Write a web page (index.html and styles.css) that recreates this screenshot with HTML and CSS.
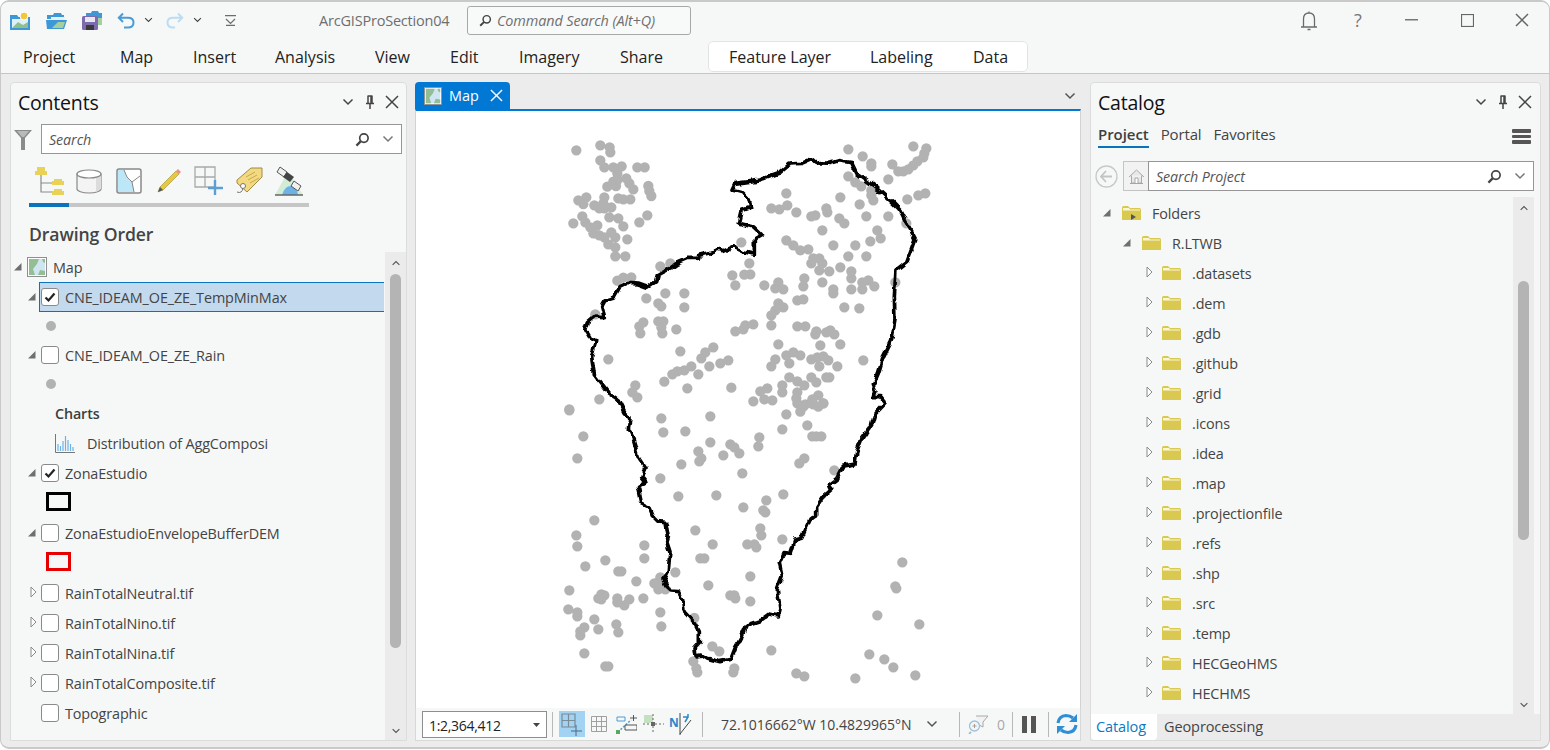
FILE: index.html
```html
<!DOCTYPE html>
<html lang="en">
<head>
<meta charset="utf-8">
<title>ArcGISProSection04</title>
<link rel="stylesheet" href="styles.css">
</head>
<body>
<svg class="defs" width="0" height="0">
  <defs>
    <symbol id="folder" viewBox="0 0 19 15"><path d="M0 2.500Q0 1 1.500 1H6L8 3H17.500Q19 3 19 4.500V15H0Z" fill="#dac950"/><path d="M1 3H7L8 4.500H18V5.500H1Z" fill="#fbf6d6"/></symbol>
    <symbol id="tri" viewBox="0 0 9 9"><path d="M8.500 1V8.500H1Z" fill="#6f6f6f"/></symbol>
    <symbol id="trio" viewBox="0 0 7 12"><path d="M1 1L6 6L1 11Z" fill="#fff" stroke="#8a8a8a"/></symbol>
    <symbol id="chev" viewBox="0 0 12 8"><path d="M1.500 1.500L6 6L10.500 1.500" fill="none" stroke="currentColor" stroke-width="1.500"/></symbol>
    <symbol id="x" viewBox="0 0 14 14"><path d="M1 1L13 13M13 1L1 13" fill="none" stroke="currentColor" stroke-width="1.500"/></symbol>
    <symbol id="pin" viewBox="0 0 10 14"><path d="M2.500 1H7.500M3 1V8M7 1V8H6V1M1 8.500H9M5 9V14" fill="none" stroke="#444" stroke-width="1.500"/></symbol>
    <symbol id="mag" viewBox="0 0 16 16"><circle cx="9.500" cy="6.500" r="4.500" fill="none" stroke="#444" stroke-width="1.800"/><path d="M6 10L1.500 14.500" stroke="#444" stroke-width="2.400"/></symbol>
    <symbol id="check" viewBox="0 0 18 18"><path d="M4.500 9.500L7.500 12.500L13.500 5.500" fill="none" stroke="#222" stroke-width="2.200"/></symbol>
    <symbol id="mapic" viewBox="0 0 20 20"><rect x=".5" y=".5" width="19" height="19" fill="#fff" stroke="#8f8f8f"/><path d="M2 2H18V18H2Z" fill="#cfe6f2"/><path d="M2 2H12L10 7L6 12L8 18H2Z" fill="#93bd93"/><path d="M11 18L13 13L18 14V18ZM15 2H18V6L16 5Z" fill="#93bd93"/></symbol>
  </defs>
</svg>
<div class="app">
  <header class="titlebar">
    <div class="qat">
      <svg width="21" height="19" viewBox="0 0 21 19"><path d="M0 4H7L8.500 6H20V19H0Z" fill="#3e98d8"/><path d="M2 8H18V17H2Z" fill="#dff0fa"/><path d="M2 17L8 11L13 14L18 11V17Z" fill="#8fc08c"/><circle cx="14" cy="5" r="4" fill="#f2c73c" stroke="#fff"/></svg>
      <svg width="21" height="17" viewBox="0 0 21 17"><path d="M1 3H7L8 1H15L16 3H18V7H1Z" fill="#3e98d8"/><path d="M5 5H19V9H5Z" fill="#e4f1f9"/><path d="M0 8H21L18 17H1Z" fill="#3e98d8"/><path d="M6 16L12 10H19L17 16Z" fill="#a5cf9f"/></svg>
      <svg width="21" height="20" viewBox="0 0 21 20"><path d="M4 3H9L10 1H16L17 3H20V15H4Z" fill="#3e98d8"/><rect x="0" y="6" width="16" height="14" rx="1.500" fill="#7c6cae"/><rect x="3" y="7" width="10" height="5" fill="#e8e6ef"/><rect x="4" y="15" width="8" height="5" fill="#3a3a3a"/><path d="M16 8H20V15H16Z" fill="#a5cf9f"/></svg>
      <svg class="undo" width="18" height="17" viewBox="0 0 18 17"><path d="M6 1.500L1.800 5.800L6 10M2 5.800H11Q16.500 5.800 16.500 10.500Q16.500 15.500 11 15.500H7" fill="none" stroke="#4a9cd6" stroke-width="2"/></svg>
      <svg class="qchev" width="9" height="6"><use href="#chev"/></svg>
      <svg class="redo" width="18" height="17" viewBox="0 0 18 17"><path d="M12 1.500L16.200 5.800L12 10M16 5.800H7Q1.500 5.800 1.500 10.500Q1.500 15.500 7 15.500H9" fill="none" stroke="#bcdcf2" stroke-width="2"/></svg>
      <svg class="qchev" width="9" height="6"><use href="#chev"/></svg>
      <svg class="cust" width="11" height="11" viewBox="0 0 11 11"><path d="M0 .7H11M1 4L5.500 8.500L10 4M1 10.400H10" fill="none" stroke="#6c6c6c" stroke-width="1.200"/></svg>
    </div>
    <div class="doc">ArcGISProSection04</div>
    <div class="cmd">
      <svg width="13" height="13"><use href="#mag"/></svg>
      <span>Command Search (Alt+Q)</span>
    </div>
    <div class="winbtns">
      <svg width="18" height="21" viewBox="0 0 18 21"><path d="M9 1.500V3M1 17H17M3.500 17V9Q3.500 3 9 3Q14.500 3 14.500 9V17M7.500 19.500H10.500" fill="none" stroke="#6a6a6a" stroke-width="1.300"/></svg>
      <span class="help">?</span>
      <svg class="min" width="13" height="2"><rect width="13" height="1.500" fill="#777"/></svg>
      <svg class="max" width="13" height="13"><rect x=".5" y=".5" width="12" height="12" fill="none" stroke="#666" stroke-width="1.200"/></svg>
      <svg class="close" width="14" height="14"><use href="#x"/></svg>
    </div>
  </header>
  <nav class="ribbon">
    <div class="rtabs">
      <span>Project</span><span>Map</span><span>Insert</span><span>Analysis</span><span>View</span><span>Edit</span><span>Imagery</span><span>Share</span>
    </div>
    <div class="ctx">
      <span>Feature Layer</span><span>Labeling</span><span>Data</span>
    </div>
  </nav>
  <main class="main">
    <section class="panel left">
      <div class="phead">
        <h2>Contents</h2>
        <div class="pctl">
          <svg class="c1" width="12" height="8"><use href="#chev"/></svg>
          <svg class="c2" width="10" height="14"><use href="#pin"/></svg>
          <svg class="c3" width="14" height="14"><use href="#x"/></svg>
        </div>
      </div>
      <div class="filter">
        <svg width="18" height="21" viewBox="0 0 18 21"><path d="M0 1H18L11 9V21H7V9Z" fill="#8a8a8a"/><path d="M3 2H15L10 8H8Z" fill="#b9b9b9"/></svg>
        <div class="search">
          <em>Search</em>
          <svg class="smag" width="15" height="15"><use href="#mag"/></svg>
          <svg class="schev" width="12" height="8"><use href="#chev"/></svg>
        </div>
      </div>
      <div class="views">
        <div class="view"><svg width="29" height="30" viewBox="0 0 29 30"><path d="M6 9V26H18M6 17H18" fill="none" stroke="#8a8a8a" stroke-width="1.200"/><path d="M2 1H10V5H12V9H0V5H2ZM19 13H27V15H29V19H17V15H19ZM19 23H27V25H29V29H17V25H19Z" fill="#e8d257"/></svg></div>
        <div class="view"><svg width="26" height="26" viewBox="0 0 26 26"><path d="M1 6V21C1 23 6 25 13 25S25 23 25 21V6Z" fill="#f4f4f4" stroke="#888" stroke-width="1.200"/><path d="M20 9V24L25 21V6Z" fill="#dcdcdc"/><ellipse cx="13" cy="6" rx="12" ry="4" fill="#fff" stroke="#888" stroke-width="1.200"/></svg></div>
        <div class="view"><svg width="26" height="26" viewBox="0 0 26 26"><rect x="1" y="1" width="24" height="24" rx="2" fill="#fff" stroke="#888" stroke-width="1.500"/><path d="M2 2H8L11 9L16 14L18 24H2Z" fill="#bde6f7"/><path d="M8 2L11 9L16 14L18 24M16 14L24 8" fill="none" stroke="#888"/></svg></div>
        <div class="view"><svg width="26" height="26" viewBox="0 0 26 26"><path d="M2 24L4 19L20 3L23 6L7 22Z" fill="#e8c83c" stroke="#9a8a3a" stroke-width=".6"/><path d="M20 3L22 1L25 4L23 6Z" fill="#e88f8f"/><path d="M2 24L4 19L7 22Z" fill="#555"/></svg></div>
        <div class="view"><svg width="30" height="30" viewBox="0 0 30 30"><path d="M1 1H21V21H1ZM11 1V21M1 11H21" fill="none" stroke="#a8a8a8" stroke-width="1.300"/><path d="M21 14V29M14 22H29" stroke="#5b9fd6" stroke-width="2.400"/></svg></div>
        <div class="view"><svg width="28" height="28" viewBox="0 0 28 28"><path d="M16 1H27V10L12 25L2 16V13Z" fill="#f2d982" stroke="#a08a44"/><path d="M11 10L20 5M13 13L22 8M15 16L24 11" stroke="#c9a94d"/><circle cx="8" cy="19" r="2.500" fill="#fff" stroke="#777"/><path d="M8 21Q7 27 2 25" fill="none" stroke="#777"/></svg></div>
        <div class="view"><svg width="30" height="30" viewBox="0 0 30 30"><path d="M1 29L11 11L19 13L29 29Z" fill="#d2ecd6"/><path d="M8 29Q11 19 18 20Q23 22 24 29Z" fill="#6db2e6"/><path d="M1 29H29" stroke="#666" stroke-width="1.500"/><path d="M6 1L13 6L10 11L3 6ZM20 15L27 20L24 25L17 20Z" fill="#f0f0f0" stroke="#555"/><path d="M13 6L20 11L16 16L9 11Z" fill="#444"/></svg></div>
      </div>
      <div class="vline"><span></span></div>
      <h3 class="order">Drawing Order</h3>
      <div class="treewrap">
        <div class="tree">
          <div class="row r-map"><svg class="t" width="9" height="9"><use href="#tri"/></svg><svg class="mi" width="20" height="20"><use href="#mapic"/></svg><span>Map</span></div>
          <div class="row r-l"><svg class="t" width="9" height="9"><use href="#tri"/></svg><div class="lbl sel"><i class="cb"><svg width="18" height="18"><use href="#check"/></svg></i><span>CNE_IDEAM_OE_ZE_TempMinMax</span></div></div>
          <div class="sym"><b class="dot"></b></div>
          <div class="row r-l"><svg class="t" width="9" height="9"><use href="#tri"/></svg><div class="lbl"><i class="cb"></i><span>CNE_IDEAM_OE_ZE_Rain</span></div></div>
          <div class="sym"><b class="dot"></b></div>
          <div class="row r-h"><strong>Charts</strong></div>
          <div class="row r-h"><svg width="20" height="20" viewBox="0 0 20 20"><path d="M.5 1V19.500H20" fill="none" stroke="#777"/><path d="M3 18V11M5.500 18V13M8 18V8M10.500 18V3M13 18V7M15.500 18V11M18 18V14" stroke="#6db2e6" stroke-width="1.200"/></svg><span class="chartname">Distribution of AggComposi</span></div>
          <div class="row r-l"><svg class="t" width="9" height="9"><use href="#tri"/></svg><div class="lbl"><i class="cb"><svg width="18" height="18"><use href="#check"/></svg></i><span>ZonaEstudio</span></div></div>
          <div class="sym tall"><b class="swatch"></b></div>
          <div class="row r-l"><svg class="t" width="9" height="9"><use href="#tri"/></svg><div class="lbl"><i class="cb"></i><span>ZonaEstudioEnvelopeBufferDEM</span></div></div>
          <div class="sym tall"><b class="swatch red"></b></div>
          <div class="row r-l"><svg class="to" width="7" height="12"><use href="#trio"/></svg><div class="lbl"><i class="cb"></i><span>RainTotalNeutral.tif</span></div></div>
          <div class="row r-l"><svg class="to" width="7" height="12"><use href="#trio"/></svg><div class="lbl"><i class="cb"></i><span>RainTotalNino.tif</span></div></div>
          <div class="row r-l"><svg class="to" width="7" height="12"><use href="#trio"/></svg><div class="lbl"><i class="cb"></i><span>RainTotalNina.tif</span></div></div>
          <div class="row r-l"><svg class="to" width="7" height="12"><use href="#trio"/></svg><div class="lbl"><i class="cb"></i><span>RainTotalComposite.tif</span></div></div>
          <div class="row r-none"><div class="lbl"><i class="cb"></i><span>Topographic</span></div></div>
        </div>
        <div class="sb sb-l"><svg width="10" height="6"><use href="#chev"/></svg><div class="thumb"></div><svg class="down" width="10" height="6"><use href="#chev"/></svg></div>
      </div>
    </section>

    <section class="center">
      <div class="tabstrip">
        <div class="maptab"><svg width="18" height="18"><use href="#mapic"/></svg><span>Map</span><svg class="tabx" width="13" height="13"><use href="#x"/></svg></div>
        <svg class="stripchev" width="12" height="8"><use href="#chev"/></svg>
      </div>
      <div class="mapview">
        <svg class="mapsvg" width="664" height="597" viewBox="416 111 664 597">
          <defs>
            <filter id="rough" filterUnits="userSpaceOnUse" x="0" y="0" width="1200" height="1700" color-interpolation-filters="sRGB"><feTurbulence type="fractalNoise" baseFrequency=".045" numOctaves="1" seed="7"/><feDisplacementMap in="SourceGraphic" scale="22" xChannelSelector="R" yChannelSelector="G"/></filter>
          </defs>
          <g transform="translate(560 130) scale(.33333)" fill="none" stroke-linecap="round" stroke-linejoin="round">
            <path stroke="#b2b2b2" stroke-width="31" d="M49 61h0M121 46h0M149 52h0M151 67h0M121 91h0M133 112h0M160 112h0M185 109h0M232 112h0M254 112h0M172 130h0M172 150h0M160 155h0M199 145h0M208 160h0M220 178h0M142 170h0M168 168h0M265 168h0M268 183h0M274 198h0M175 205h0M190 208h0M211 208h0M133 202h0M79 202h0M55 211h0M70 222h0M103 226h0M118 235h0M133 235h0M154 232h0M130 220h0M148 262h0M175 265h0M190 289h0M262 256h0M238 277h0M40 280h0M67 259h0M76 277h0M112 286h0M91 292h0M100 310h0M118 316h0M133 322h0M154 307h0M166 322h0M145 343h0M166 352h0M166 379h0M196 379h0M202 328h0M301 409h0M331 400h0M172 452h0M190 443h0M214 442h0M106 553h0M544 337h0M568 400h0M517 436h0M553 434h0M571 433h0M526 466h0M613 466h0M655 457h0M646 475h0M670 478h0M655 520h0M670 532h0M646 541h0M634 556h0M634 586h0M259 505h0M316 490h0M373 490h0M295 520h0M304 529h0M373 532h0M250 577h0M238 589h0M241 610h0M295 574h0M310 574h0M304 592h0M307 610h0M349 598h0M526 604h0M550 598h0M556 586h0M580 583h0M712 589h0M736 589h0M769 604h0M766 613h0M799 607h0M811 601h0M823 613h0M655 643h0M781 646h0M841 643h0M361 664h0M460 652h0M436 667h0M424 685h0M145 688h0M505 691h0M481 700h0M448 709h0M394 709h0M373 721h0M352 724h0M337 733h0M415 733h0M313 755h0M382 775h0M514 773h0M226 766h0M217 787h0M232 802h0M118 808h0M28 838h0M679 190h0M841 202h0M899 223h0M634 235h0M658 238h0M682 226h0M709 247h0M754 259h0M766 256h0M799 235h0M802 247h0M838 265h0M853 280h0M919 259h0M985 259h0M1039 280h0M787 301h0M952 301h0M962 325h0M931 334h0M820 346h0M886 346h0M679 331h0M700 346h0M721 361h0M745 358h0M760 385h0M754 400h0M778 385h0M787 400h0M778 421h0M808 424h0M865 379h0M919 379h0M841 412h0M874 424h0M874 445h0M733 445h0M730 469h0M787 457h0M820 478h0M820 490h0M874 478h0M907 457h0M907 478h0M925 451h0M943 469h0M1006 457h0M712 511h0M730 508h0M853 532h0M898 535h0M865 58h0M908 79h0M934 100h0M934 109h0M997 103h0M1060 49h0M1099 55h0M1093 70h0M1090 82h0M1072 94h0M1060 106h0M1045 118h0M1030 124h0M1015 124h0M985 148h0M865 139h0M886 157h0M904 169h0M934 181h0M934 196h0M940 211h0M1042 208h0M1075 196h0M1096 190h0M910 691h0M688 742h0M712 754h0M733 766h0M754 742h0M769 757h0M799 742h0M808 742h0M700 667h0M721 676h0M679 676h0M688 700h0M646 688h0M634 709h0M754 688h0M772 682h0M790 679h0M778 709h0M805 691h0M832 709h0M667 766h0M667 787h0M622 775h0M601 784h0M613 808h0M637 811h0M580 814h0M712 787h0M709 805h0M712 820h0M736 823h0M757 808h0M775 796h0M790 820h0M760 823h0"/>
            <path transform="translate(0 810)" stroke="#b2b2b2" stroke-width="31" d="M28 31h0M304 55h0M451 49h0M730 20h0M721 35h0M679 43h0M757 10h0M775 20h0M790 10h0M742 76h0M667 88h0M757 109h0M769 109h0M784 109h0M70 109h0M310 97h0M376 94h0M451 127h0M511 133h0M523 142h0M538 160h0M598 112h0M595 139h0M415 154h0M424 175h0M418 184h0M490 166h0M364 193h0M52 175h0M733 175h0M718 190h0M823 211h0M547 220h0M301 235h0M670 283h0M355 289h0M469 286h0M619 301h0M550 322h0M610 331h0M616 337h0M103 361h0M406 391h0M601 385h0M604 406h0M49 406h0M52 439h0M667 418h0M253 436h0M458 433h0M562 433h0M583 433h0M589 442h0M253 475h0M421 475h0M433 475h0M136 481h0M76 499h0M1027 487h0M175 514h0M184 514h0M346 517h0M571 529h0M301 532h0M229 544h0M283 550h0M295 556h0M445 556h0M28 571h0M295 568h0M316 568h0M1006 559h0M1009 565h0M133 586h0M124 583h0M115 595h0M124 598h0M172 595h0M208 598h0M250 595h0M172 607h0M193 616h0M511 586h0M523 586h0M526 595h0M571 604h0M25 628h0M52 637h0M52 649h0M301 637h0M952 646h0M403 654h0M103 658h0M169 673h0M1078 673h0M304 679h0M73 682h0M61 694h0M115 688h0M175 697h0M61 706h0M73 760h0M457 739h0M478 754h0M634 751h0M928 763h0M973 778h0M1000 802h0M400 784h0M409 805h0M412 817h0M523 805h0M520 817h0M136 799h0M145 799h0M709 820h0M733 829h0M886 835h0M1066 826h0"/>
            <path filter="url(#rough)" stroke="#000" stroke-width="11" d="M526 160L516 181L550 190L565 205L572 232L547 241L538 280L580 290L604 313L583 325L583 373L550 365L517 350L490 362L475 358L445 370L418 376L415 385L385 385L350 400L325 418L295 435L290 452L262 472L235 462L200 460L180 470L160 505L135 512L125 530L133 560L105 558L85 575L77 600L92 625L107 632L95 680L103 735L130 770L145 790L175 810L180 820L195 850L210 865L205 895L220 930L235 980L255 1010L245 1042L258 1058L235 1072L245 1120L268 1132L280 1160L295 1175L318 1178L325 1220L320 1235L330 1265L325 1320L312 1350L330 1383L355 1385L368 1410L372 1445L405 1480L418 1505L418 1540L405 1555L408 1578L425 1575L440 1585L480 1595L512 1588L525 1555L545 1520L560 1485L605 1470L630 1452L655 1458L660 1438L652 1380L667 1340L658 1300L672 1268L692 1270L705 1230L725 1225L750 1170L770 1155L770 1130L790 1100L815 1078L808 1062L830 1045L850 1008L885 1002L890 965L905 925L935 885L945 850L975 818L960 800L940 800L948 785L940 765L955 730L970 680L995 630L1005 570L1003 500L1008 420L1040 395L1065 327L1045 290L1020 240L1000 220L950 175L890 130L875 98L835 92L810 100L785 98L770 100L755 87L725 100L690 102L660 128L600 150Z"/>
          </g>
        </svg>
      </div>
      <div class="status">
        <div class="scale"><span>1:2,364,412</span><svg width="7" height="4" viewBox="0 0 7 4"><path d="M0 0H7L3.500 4Z" fill="#444"/></svg></div>
        <i class="sep s1"></i>
        <div class="sbtn on"><svg width="22" height="23" viewBox="0 0 22 23"><path d="M1 1H14V14H1ZM7.500 1V14M1 7.500H14" fill="none" stroke="#7a8a96" stroke-width="1.200"/><path d="M15 12V23M10 18H21" stroke="#4a6a82"/></svg></div>
        <div class="sbtn"><svg width="16" height="16" viewBox="0 0 16 16"><path d="M.5 .5H15.500V15.500H.5ZM5.500 .5V15.500M10.500 .5V15.500M.5 5.500H15.500M.5 10.500H15.500" fill="none" stroke="#a0a0a0"/></svg></div>
        <div class="sbtn"><svg width="21" height="19" viewBox="0 0 21 19"><path d="M2 17L15 5" stroke="#4a9cd6" stroke-dasharray="2 1.500" stroke-width="1.500"/><path d="M1 2H9V6H1Z" fill="none" stroke="#4a9cd6"/><path d="M14 3H21M17.500 0V6" stroke="#555"/><path d="M9 10H21V15H9Z" fill="none" stroke="#555"/><rect y="15" width="4" height="4" fill="#5aa85a"/></svg></div>
        <div class="sbtn"><svg width="21" height="20" viewBox="0 0 21 20"><rect x="1" y="1" width="9" height="8" fill="#c5dfc0"/><path d="M10 0V20M0 10H21" stroke="#666" stroke-dasharray="2 2"/><rect x="8" y="8" width="4" height="4" fill="#666"/></svg></div>
        <div class="sbtn"><svg width="23" height="22" viewBox="0 0 23 22"><text class="ntxt" x="0" y="14">N</text><path d="M11 0V22M11 21L22 7" stroke="#444"/><path d="M14 4H19V1M19 4L16 9" fill="none" stroke="#2d86c8" stroke-width="1.500"/></svg></div>
        <i class="sep s2"></i>
        <span class="coords">72.1016662°W 10.4829965°N</span>
        <svg class="cchev" width="12" height="8"><use href="#chev"/></svg>
        <i class="sep s3"></i>
        <svg class="sel0" width="21" height="20" viewBox="0 0 21 20"><path d="M8 2H20L15 8V13L11 11" fill="#f2f2f2" stroke="#a8a8a8"/><circle cx="6.500" cy="12" r="5" fill="#eef6fb" stroke="#9fc0d8" stroke-width="1.300"/><path d="M3 18L1 20" stroke="#9fc0d8" stroke-width="2"/><path d="M4.500 12H8.500M6.500 10V14" stroke="#b98"/></svg>
        <span class="zero">0</span>
        <i class="sep s4"></i>
        <div class="pause"><b></b><b></b></div>
        <i class="sep s5"></i>
        <svg class="refresh" width="22" height="22" viewBox="0 0 22 22"><path d="M2 10Q3 3 10 2.500Q14 2.500 17 5" fill="none" stroke="#2f8fd6" stroke-width="3.200"/><path d="M21 1V9H13Z" fill="#2f8fd6"/><path d="M20 12Q19 19 12 19.500Q8 19.500 5 17" fill="none" stroke="#2f8fd6" stroke-width="3.200"/><path d="M1 21V13H9Z" fill="#2f8fd6"/></svg>
      </div>
    </section>

    <section class="panel right">
      <div class="phead">
        <h2>Catalog</h2>
        <div class="pctl">
          <svg class="c1" width="12" height="8"><use href="#chev"/></svg>
          <svg class="c2" width="10" height="14"><use href="#pin"/></svg>
          <svg class="c3" width="14" height="14"><use href="#x"/></svg>
        </div>
      </div>
      <div class="ctabs">
        <span class="on">Project</span><span>Portal</span><span>Favorites</span>
        <div class="burger"><b></b><b></b><b></b></div>
      </div>
      <div class="crow">
        <svg class="back" width="23" height="23" viewBox="0 0 23 23"><circle cx="11.500" cy="11.500" r="10.500" fill="#f6f8f8" stroke="#c8c8c8" stroke-width="1.300"/><path d="M11 6L6 11.500L11 17M6.500 11.500H17" fill="none" stroke="#c4c4c4" stroke-width="1.800"/></svg>
        <div class="home"><svg width="15" height="15" viewBox="0 0 15 15"><path d="M0 8L7.500 1L15 8M2.500 6.500V14H12.500V6.500" fill="#e8e8e8" stroke="#aaa"/><path d="M6 14V9H9V14" fill="#fff" stroke="#aaa"/><path d="M1 14.500H14" stroke="#7fbf7f"/></svg></div>
        <div class="search csearch">
          <em>Search Project</em>
          <svg class="smag" width="15" height="15"><use href="#mag"/></svg>
          <svg class="schev" width="12" height="8"><use href="#chev"/></svg>
        </div>
      </div>
      <div class="treewrap ctree">
        <div class="tree">
          <div class="frow l0"><svg class="t" width="9" height="9"><use href="#tri"/></svg><div class="fwrap"><svg class="f" width="19" height="15"><use href="#folder"/></svg><svg class="mini" width="5" height="6" viewBox="0 0 5 6"><path d="M0 0L5 3L0 6Z" fill="#555"/></svg></div><span>Folders</span></div>
          <div class="frow l1"><svg class="t" width="9" height="9"><use href="#tri"/></svg><svg class="f" width="19" height="15"><use href="#folder"/></svg><span>R.LTWB</span></div>
          <div class="frow l2"><svg class="to" width="7" height="12"><use href="#trio"/></svg><svg class="f" width="19" height="15"><use href="#folder"/></svg><span>.datasets</span></div>
          <div class="frow l2"><svg class="to" width="7" height="12"><use href="#trio"/></svg><svg class="f" width="19" height="15"><use href="#folder"/></svg><span>.dem</span></div>
          <div class="frow l2"><svg class="to" width="7" height="12"><use href="#trio"/></svg><svg class="f" width="19" height="15"><use href="#folder"/></svg><span>.gdb</span></div>
          <div class="frow l2"><svg class="to" width="7" height="12"><use href="#trio"/></svg><svg class="f" width="19" height="15"><use href="#folder"/></svg><span>.github</span></div>
          <div class="frow l2"><svg class="to" width="7" height="12"><use href="#trio"/></svg><svg class="f" width="19" height="15"><use href="#folder"/></svg><span>.grid</span></div>
          <div class="frow l2"><svg class="to" width="7" height="12"><use href="#trio"/></svg><svg class="f" width="19" height="15"><use href="#folder"/></svg><span>.icons</span></div>
          <div class="frow l2"><svg class="to" width="7" height="12"><use href="#trio"/></svg><svg class="f" width="19" height="15"><use href="#folder"/></svg><span>.idea</span></div>
          <div class="frow l2"><svg class="to" width="7" height="12"><use href="#trio"/></svg><svg class="f" width="19" height="15"><use href="#folder"/></svg><span>.map</span></div>
          <div class="frow l2"><svg class="to" width="7" height="12"><use href="#trio"/></svg><svg class="f" width="19" height="15"><use href="#folder"/></svg><span>.projectionfile</span></div>
          <div class="frow l2"><svg class="to" width="7" height="12"><use href="#trio"/></svg><svg class="f" width="19" height="15"><use href="#folder"/></svg><span>.refs</span></div>
          <div class="frow l2"><svg class="to" width="7" height="12"><use href="#trio"/></svg><svg class="f" width="19" height="15"><use href="#folder"/></svg><span>.shp</span></div>
          <div class="frow l2"><svg class="to" width="7" height="12"><use href="#trio"/></svg><svg class="f" width="19" height="15"><use href="#folder"/></svg><span>.src</span></div>
          <div class="frow l2"><svg class="to" width="7" height="12"><use href="#trio"/></svg><svg class="f" width="19" height="15"><use href="#folder"/></svg><span>.temp</span></div>
          <div class="frow l2"><svg class="to" width="7" height="12"><use href="#trio"/></svg><svg class="f" width="19" height="15"><use href="#folder"/></svg><span>HECGeoHMS</span></div>
          <div class="frow l2"><svg class="to" width="7" height="12"><use href="#trio"/></svg><svg class="f" width="19" height="15"><use href="#folder"/></svg><span>HECHMS</span></div>
        </div>
        <div class="sb sb-r"><svg width="10" height="6"><use href="#chev"/></svg><div class="thumb"></div><svg class="down" width="10" height="6"><use href="#chev"/></svg></div>
      </div>
      <div class="btabs">
        <span class="on">Catalog</span><span>Geoprocessing</span>
      </div>
    </section>
  </main>
</div>
</body>
</html>
```
FILE: styles.css
```css
* { box-sizing: border-box; }
html, body { margin: 0; padding: 0; background: #fff; }
body { font-family: "Open Sans", "Noto Sans", sans-serif; color: #444; overflow: hidden; }
svg { display: block; flex: none; }
.defs { position: absolute; }

.app {
  width: 1550px; height: 749px; background: #ececec;
  border: 1px solid #c9c9c9; border-top-width: 2px; border-bottom-width: 2px;
  border-radius: 9px; overflow: hidden;
  display: flex; flex-direction: column;
}

.titlebar { height: 36px; background: #f6f8f8; display: flex; align-items: center; flex: none; }
.qat { display: flex; align-items: center; width: 318px; padding-left: 9px; gap: 15px; color: #444; }
.qat .undo { margin-left: -1px; }
.qat .qchev { margin-left: -6px; }
.qat .redo { margin-left: -2px; }
.qat .cust { margin-left: 8px; }
.doc { font-size: 14.500px; color: #6e6e6e; width: 148px; letter-spacing: -.2px; }
.cmd {
  width: 224px; height: 29px; border: 1px solid #a8a8a8; border-radius: 3px; background: #f8f9f9;
  display: flex; align-items: center; gap: 5px; padding-left: 11px; font-size: 14.400px; font-style: italic; color: #6f6f6f;
  letter-spacing: -.1px; white-space: nowrap;
}
.winbtns { margin-left: auto; display: flex; align-items: center; color: #666; padding-right: 20px; }
.help { font-size: 18px; color: #777; margin-left: 36px; width: 10px; }
.winbtns .min { margin-left: 41px; }
.winbtns .max { margin-left: 43px; }
.winbtns .close { margin-left: 41px; }

.ribbon {
  height: 36px; background: #f6f8f8; border-bottom: 1px solid #c6c6c6;
  display: flex; align-items: flex-end; flex: none; font-size: 16px; color: #222;
}
.rtabs { display: grid; grid-template-columns: 97px 73px 82px 100px 75px 69px 101px 88px; width: 707px; padding: 2px 0 0 22px; height: 35px; align-items: center; }
.ctx {
  width: 320px; height: 31px; margin-bottom: 1px; background: #fff; border: 1px solid #e2e4e4; border-radius: 5px;
  display: grid; grid-template-columns: 141px 103px 50px; padding-left: 20px; align-items: center;
}

.main { flex: 1; display: flex; padding-top: 8px; padding-left: 9px; min-height: 0; }
.panel { background: #f6f8f8; border: 1px solid #dcdcdc; border-radius: 4px 4px 0 0; height: 659px; display: flex; flex-direction: column; overflow: hidden; }
.left { width: 397px; margin-right: 8px; }
.right { width: 451px; margin-left: 9px; }

.phead { height: 38px; display: flex; align-items: center; padding-left: 7px; flex: none; }
.phead h2 { margin: 0; font-weight: 400; font-size: 19.500px; color: #111; letter-spacing: -.2px; }
.pctl { margin-left: auto; display: flex; align-items: center; color: #444; padding-right: 7px; }
.pctl .c2 { margin-left: 11px; }
.pctl .c3 { margin-left: 10px; }
.right .pctl { padding-right: 8px; }

.filter { display: flex; align-items: center; margin-top: 3px; height: 30px; padding-left: 3px; gap: 9px; flex: none; }
.search {
  width: 361px; height: 30px; background: #fff; border: 1px solid #969696;
  display: flex; align-items: center; padding-left: 7px; font-size: 14.300px; color: #555;
}
.search em { letter-spacing: -.1px; }
.search .smag { margin-left: auto; }
.search .schev { margin: 0 7px 0 12px; color: #777; }

.views { display: flex; height: 38px; margin-top: 8px; padding-left: 18px; flex: none; }
.view { width: 40px; display: flex; align-items: center; justify-content: center; }
.vline { height: 4px; width: 280px; margin: 3px 0 0 18px; background: #c6c6c6; flex: none; }
.vline span { display: block; height: 4px; width: 40px; background: #0a73bb; }
.order { margin: 10px 0 0 18px; height: 34px; line-height: 35px; font-size: 17.600px; font-weight: 600; color: #444; flex: none; letter-spacing: -.1px; }

.treewrap { flex: 1; display: flex; margin-top: 1px; min-height: 0; }
.tree { flex: 1; min-width: 0; overflow: hidden; font-size: 14.400px; letter-spacing: -.12px; }
.sb { width: 21px; background: #ebebeb; display: flex; flex-direction: column; align-items: center; color: #555; padding-top: 8px; flex: none; }
.sb .thumb { width: 11px; background: #b4b4b4; border-radius: 6px; }
.sb > svg:first-child { transform: rotate(180deg); }
.sb .down { margin-top: auto; margin-bottom: 6px; }
.sb-l .thumb { height: 374px; margin-top: 8px; }
.sb-r .thumb { height: 259px; margin-top: 70px; }

.row { height: 30px; display: flex; align-items: center; }
.row .t { margin-top: -2px; }
.r-map { padding-left: 2px; }
.r-map .mi { margin-left: 5px; }
.r-map span { margin-left: 6px; }
.r-l { padding-left: 16px; }
.r-l .t { margin-right: 3px; }
.r-l .to { margin: -2px 2px 0 3px; }
.r-none { padding-left: 28px; }
.lbl { flex: 1; height: 30px; display: flex; align-items: center; gap: 6px; padding-left: 1px; border: 1px solid transparent; border-right: none; min-width: 0; white-space: nowrap; }
.sel { background: #c3d9ee; border-color: #0a73bb; margin-right: 1px; }
.cb { display: block; width: 18px; height: 18px; background: #fff; border: 1px solid #8a8a8a; border-radius: 3px; flex: none; }
.cb svg { margin: -1px; }
.r-h { padding-left: 44px; }
.r-h strong { font-weight: 600; color: #3d3d3d; font-size: 14.300px; }
.chartname { margin-left: 12px; }
.sym { height: 28px; padding: 9px 0 0 35px; }
.sym.tall { height: 30px; padding: 4px 0 0 35px; }
.dot { display: block; width: 10px; height: 10px; border-radius: 50%; background: #b2b2b2; }
.swatch { display: block; width: 25px; height: 19px; border: 3px solid #000; background: #f6f8f8; }
.swatch.red { border-color: #e60000; }

.center { width: 666px; height: 659px; display: flex; flex-direction: column; }
.tabstrip { height: 27px; display: flex; align-items: center; flex: none; }
.maptab { width: 95px; height: 27px; background: #0078d4; border-radius: 4px 4px 0 0; color: #fff; display: flex; align-items: center; padding-left: 9px; font-size: 14.400px; }
.maptab span { margin-left: 7px; }
.tabx { margin-left: 11px; }
.stripchev { margin-left: auto; margin-right: 5px; color: #555; }
.mapview { height: 599px; background: #fff; border-top: 2px solid #0078d4; border-left: 1px solid #d2d2d2; border-right: 1px solid #d2d2d2; flex: none; }
.status { height: 33px; background: #f6f8f8; border-left: 1px solid #d8d8d8; border-right: 1px solid #d8d8d8; border-bottom: 1px solid #d8d8d8; display: flex; align-items: center; padding-left: 6px; font-size: 14px; flex: none; }
.scale { width: 125px; height: 27px; background: #fff; border: 1px solid #8e8e8e; display: flex; align-items: center; justify-content: space-between; padding: 1px 6px 0 6px; color: #222; margin-top: 1px; font-size: 14px; letter-spacing: -.3px; }
.sep { display: block; width: 1px; height: 25px; background: #b8b8b8; flex: none; }
.s1 { margin: 0 6px 0 5px; }
.sbtn { width: 26px; height: 26px; display: flex; align-items: center; justify-content: center; margin-right: 1px; flex: none; }
.sbtn.on { background: #a3d3f2; }
.s2 { margin: 0 18px 0 8px; }
.ntxt { font-size: 12px; font-weight: 700; fill: #2d86c8; }
.coords { width: 192px; white-space: nowrap; color: #444; font-size: 14px; padding-top: 1px; }
.cchev { margin-left: 13px; color: #555; }
.s3 { margin: 0 8px 0 21px; }
.zero { margin-left: 8px; color: #a8a8a8; width: 10px; }
.s4 { margin: 0 9px 0 5px; }
.pause { display: flex; gap: 4px; }
.pause b { display: block; width: 5px; height: 17px; background: #555; }
.s5 { margin: 0 7px 0 12px; }

.ctabs { height: 26px; margin-top: 3px; display: flex; gap: 12px; padding-left: 7px; font-size: 15px; flex: none; align-items: flex-start; letter-spacing: -.15px; }
.ctabs span { height: 24px; line-height: 20px; }
.ctabs .on { border-bottom: 2px solid #0a73bb; font-weight: 600; letter-spacing: -.05px; color: #3f3f3f; }
.burger { margin-left: auto; margin-right: 9px; margin-top: 5px; display: flex; flex-direction: column; gap: 2px; }
.burger b { display: block; width: 19px; height: 3.500px; background: #555; border-radius: 1px; }
.crow { height: 30px; margin-top: 11px; display: flex; align-items: center; padding-left: 4px; flex: none; }
.home { width: 25px; height: 30px; margin-left: 5px; border: 1px solid #c4c4c4; border-right: none; display: flex; align-items: center; justify-content: center; background: #f2f2f2; }
.csearch { width: 386px; }
.ctree { margin-top: 6px; margin-right: 6px; flex: 1; }
.ctree .tree { padding-top: 1px; }
.frow { height: 30px; display: flex; align-items: center; white-space: nowrap; }
.frow .t { margin-top: -2px; }
.frow .f { margin-top: -1px; }
.l0 { padding-left: 11px; }
.l0 .fwrap { margin-left: 11px; position: relative; }
.mini { position: absolute; left: 9px; bottom: 0; }
.l1 { padding-left: 31px; }
.l1 .f { margin-left: 11px; }
.l2 { padding-left: 55px; }
.l2 .to { margin-top: -2px; }
.l2 .f { margin-left: 9px; }
.frow span { margin-left: 11px; }
.btabs { height: 26px; background: #ebebeb; display: flex; align-items: center; font-size: 14.500px; flex: none; letter-spacing: -.1px; }
.btabs span { padding: 0 8px 0 7px; height: 26px; line-height: 25px; }
.btabs .on { background: #fff; color: #0a78c4; width: 66px; padding-left: 5px; border-radius: 0 0 4px 4px; white-space: nowrap; }
```
